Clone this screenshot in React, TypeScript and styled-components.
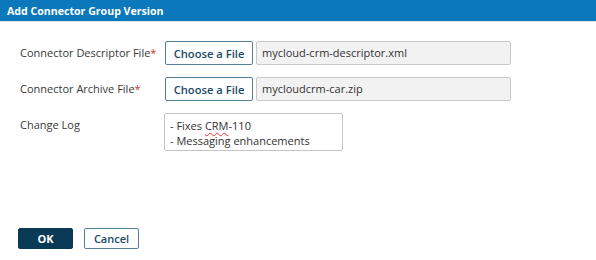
import React from "react";
import styled, {createGlobalStyle} from "styled-components";

const GlobalStyle = createGlobalStyle`
  html, body {
    margin: 0;
    padding: 0;
    background: #ffffff;
  }
  body {
    font-family: "Open Sans", "Noto Sans", sans-serif;
  }
`;

const Dialog = styled.div`
  width: 596px;
  height: 260px;
  display: flex;
  flex-direction: column;
  background: #ffffff;
`;

const Header = styled.div`
  height: 21px;
  background: #0a78bb;
  color: #ffffff;
  font-size: 10.6px;
  font-weight: 700;
  display: flex;
  align-items: center;
  padding-left: 7px;
  border-bottom: 1px solid #d9e6ef;
`;

const Body = styled.div`
  flex: 1;
  display: flex;
  flex-direction: column;
  padding: 19px 0 0 20px;
`;

const Row = styled.div`
  display: flex;
  align-items: flex-start;
  margin-bottom: 12px;
`;

const Label = styled.label`
  width: 145px;
  font-size: 11px;
  color: #383838;
  line-height: 24px;
  flex-shrink: 0;
`;

const Star = styled.span`
  color: #c0392b;
`;

const FileButton = styled.button`
  width: 88px;
  height: 24px;
  box-sizing: border-box;
  border: 1px solid #557f98;
  border-radius: 2px;
  background: #ffffff;
  color: #1d4a66;
  font-family: inherit;
  font-size: 11.2px;
  font-weight: 600;
  padding: 0;
  margin-right: 3px;
`;

const FileName = styled.div`
  width: 255px;
  height: 24px;
  box-sizing: border-box;
  border: 1px solid #c8c8c8;
  border-radius: 2px;
  background: #f2f2f2;
  color: #333333;
  font-size: 11px;
  line-height: 22px;
  padding-left: 5px;
`;

const LogBox = styled.div`
  width: 179px;
  height: 38px;
  box-sizing: border-box;
  border: 1px solid #c4c4c4;
  border-radius: 2px;
  background: #ffffff;
  color: #333333;
  font-size: 11px;
  line-height: 15px;
  padding: 4px 5px 2px;
  margin-left: -1px;
`;

const Squiggle = styled.span`
  text-decoration: underline wavy #e03030;
  text-decoration-thickness: 1px;
  text-underline-offset: 2px;
`;

const Footer = styled.div`
  margin-top: auto;
  display: flex;
  gap: 11px;
  padding: 0 0 11px 18px;
`;

const ActionButton = styled.button<{ $primary?: boolean }>`
  width: 55px;
  height: 21px;
  box-sizing: border-box;
  border-radius: 2px;
  font-family: inherit;
  font-size: 11px;
  font-weight: ${(p) => (p.$primary ? 700 : 600)};
  padding: 0;
  border: 1px solid ${(p) => (p.$primary ? "#0b3a57" : "#557f98")};
  background: ${(p) => (p.$primary ? "#0b3a57" : "#ffffff")};
  color: ${(p) => (p.$primary ? "#ffffff" : "#1d4a66")};
`;

export default function App() {
  return (
    <>
      <GlobalStyle />
      <Dialog>
        <Header>Add Connector Group Version</Header>
        <Body>
          <Row>
            <Label>
              Connector Descriptor File<Star>*</Star>
            </Label>
            <FileButton>Choose a File</FileButton>
            <FileName>mycloud-crm-descriptor.xml</FileName>
          </Row>
          <Row>
            <Label>
              Connector Archive File<Star>*</Star>
            </Label>
            <FileButton>Choose a File</FileButton>
            <FileName>mycloudcrm-car.zip</FileName>
          </Row>
          <Row>
            <Label>Change Log</Label>
            <LogBox>
              - Fixes <Squiggle>CRM</Squiggle>-110
              <br />- Messaging enhancements
            </LogBox>
          </Row>
        </Body>
        <Footer>
          <ActionButton $primary>OK</ActionButton>
          <ActionButton>Cancel</ActionButton>
        </Footer>
      </Dialog>
    </>
  );
}
